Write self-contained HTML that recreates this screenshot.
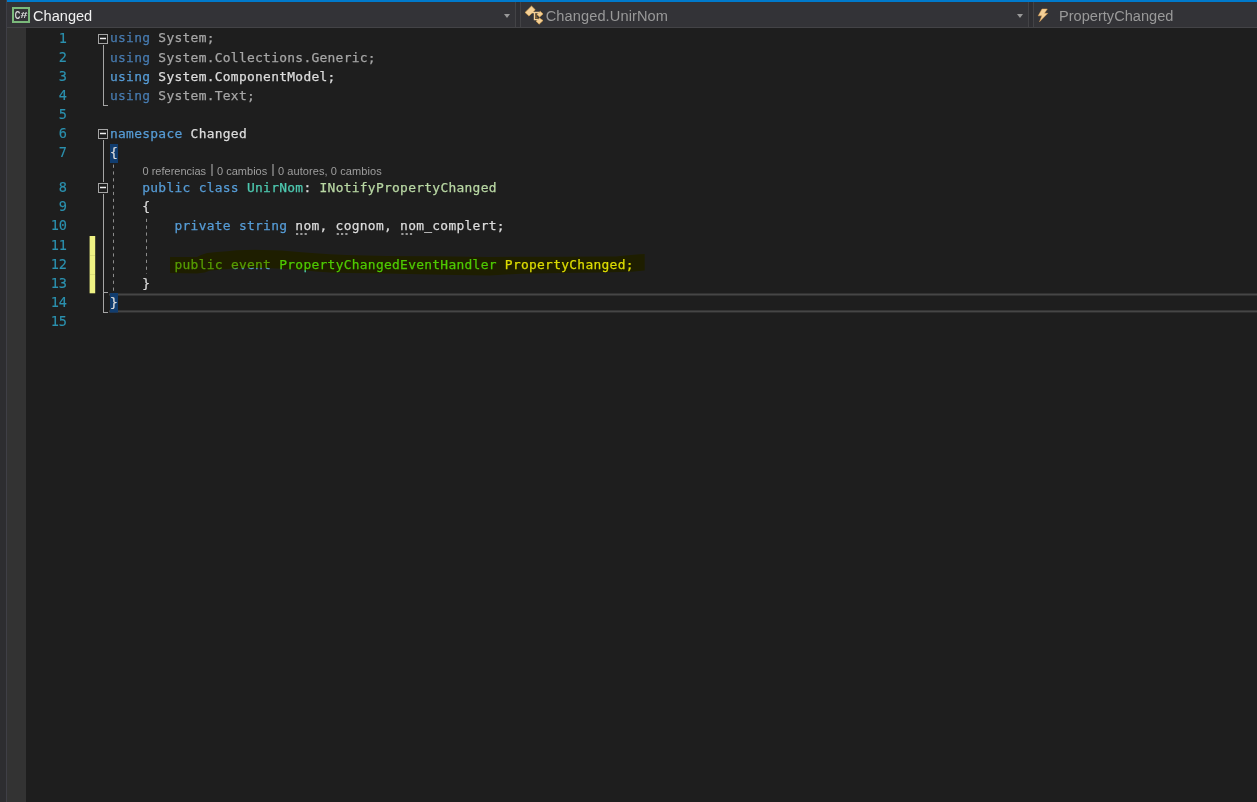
<!DOCTYPE html>
<html lang="es">
<head>
<meta charset="utf-8">
<title>Changed - UnirNom.cs</title>
<style>
  html, body { margin: 0; padding: 0; }
  body {
    width: 1257px; height: 802px; overflow: hidden; position: relative;
    background: #1e1e1e;
    font-family: "Liberation Sans", sans-serif;
  }
  #leftstrip { position: absolute; left: 0; top: 0; width: 6px; height: 802px; background: #2d2d30; }
  #leftborder { position: absolute; left: 6px; top: 0; width: 1px; height: 802px; background: #3f3f46; }
  #bluebar { position: absolute; left: 7px; top: 0; right: 0; height: 2px; background: #007acc; }
  #nav { position: absolute; left: 7px; top: 2px; right: 0; height: 25px; background: #333337; border-bottom: 1px solid #434346; }
  #margin { position: absolute; left: 7px; top: 28px; width: 19px; bottom: 0; background: #333333; }
  .navtext { position: absolute; top: 5.9px; height: 20px; line-height: 20px; font-size: 14.6px; white-space: nowrap; transform: scaleY(1.03); transform-origin: 0 15px; }
  .sep { position: absolute; top: 2px; width: 1px; height: 25px; background: #434346; }
  .gap { position: absolute; top: 2px; width: 4px; height: 25px; background: #2f2f33; }
  .arrow { position: absolute; top: 14px; width: 0; height: 0; border-left: 3.500px solid transparent; border-right: 3.500px solid transparent; border-top: 4px solid #999999; }

  #code { position: absolute; left: 0; top: 0; width: 1257px; height: 802px;
    font-family: "DejaVu Sans Mono", "Liberation Mono", monospace; font-size: 12.9px; letter-spacing: 0.296px; color: #dcdcdc; -webkit-text-stroke: 0.25px; }
  .ln { position: absolute; left: 110px; height: 19px; line-height: 19px; white-space: pre; }
  .num { font-size: 13.6px; letter-spacing: -0.125px; -webkit-text-stroke: 0.15px; position: absolute; left: 26px; width: 40.8px; text-align: right; height: 19px; line-height: 19px; color: #2b91af; white-space: pre; }
  .k { color: #569cd6; }
  .t { color: #4ec9b0; }
  .i { color: #b8d7a3; }
  .fk { color: #477bb0; }
  .f { color: #a6a6a6; }
  #lens { position: absolute; left: 142.500px; top: 162.700px; height: 16px; line-height: 16px; font-size: 11px; color: #9e9e9e; white-space: nowrap; font-family: "Liberation Sans", sans-serif; }
  #lens i { display: inline-block; width: 1.800px; height: 12.300px; background: #6a6a6a; vertical-align: -1.500px; margin: 0 4.500px 0 5.500px; }
  #deco { position: absolute; left: 0; top: 0; }
  #hl { position: absolute; left: 0; top: 0; mix-blend-mode: multiply; pointer-events: none; }
</style>
</head>
<body>
<div id="leftstrip"></div>
<div id="leftborder"></div>
<div id="bluebar"></div>
<div id="nav"></div>
<div id="margin"></div>

<!-- navigation bar contents -->
<svg id="navicons" width="1257" height="28" style="position:absolute;left:0;top:0">
  <!-- C# project icon -->
  <rect x="13" y="8" width="16" height="14" fill="none" stroke="#7bb97b" stroke-width="2"/>
  <text transform="translate(14.800 19.200) scale(0.7 1)" font-family="Liberation Sans, sans-serif" font-weight="bold" font-size="11" fill="#dcdcdc">C</text>
  <text x="20.600" y="17.800" font-family="Liberation Sans, sans-serif" font-weight="bold" font-size="8.500" fill="#dcdcdc" textLength="7" lengthAdjust="spacingAndGlyphs">#</text>
  <!-- class icon -->
  <g fill="#f3cf96" stroke="#e3a84c" stroke-width="0.600">
    <polygon points="531.500,6.100 535.200,9.700 529,16.100 525.100,12.400"/>
    <polygon points="540.200,11.300 543,13.900 539.600,17 536.900,14.400"/>
    <polygon points="539.500,18.100 543,20.500 539.100,24.200 536.100,21.300"/>
  </g>
  <path d="M531.500 12.500 H539 M534.500 12.500 V19.600 H538" fill="none" stroke="#f3cf96" stroke-width="1.400"/>
  <path d="M536 14.200 V18 H538" fill="none" stroke="#b97e2c" stroke-width="0.800"/>
  <!-- event icon -->
  <polygon points="1042,9 1047.300,9 1044.500,13.300 1047.800,13.300 1039.500,21.800 1041.800,15.800 1038.200,15.800" fill="#f3cf96" stroke="#e0a050" stroke-width="0.500"/>
</svg>
<div class="navtext" style="left:33px;color:#f1f1f1">Changed</div>
<div class="arrow" style="left:504px"></div>
<div class="sep" style="left:515px"></div>
<div class="gap" style="left:516px"></div>
<div class="sep" style="left:520px"></div>
<div class="navtext" style="left:545.700px;color:#999999;letter-spacing:0.100px">Changed.UnirNom</div>
<div class="arrow" style="left:1017px"></div>
<div class="sep" style="left:1028px"></div>
<div class="gap" style="left:1029px"></div>
<div class="sep" style="left:1033px"></div>
<div class="navtext" style="left:1059px;color:#999999">PropertyChanged</div>

<!-- editor decorations -->
<svg id="deco" width="1257" height="802" shape-rendering="crispEdges">
  <!-- change tracking -->
  <rect x="89.600" y="236" width="5.600" height="57.300" fill="#eff284" shape-rendering="auto"/>
  <rect x="90" y="255" width="5" height="1" fill="#dcdf7a"/><rect x="90" y="274" width="5" height="1" fill="#dcdf7a"/>
  <!-- current line -->
  <rect x="109" y="293.500" width="1148" height="2" fill="#464646" shape-rendering="auto"/>
  <rect x="109" y="310.400" width="1148" height="2" fill="#464646" shape-rendering="auto"/>
  <!-- brace matching -->
  <rect x="110" y="144" width="8" height="19" fill="#113d6f"/>
  <rect x="110" y="293" width="8" height="19.600" fill="#113d6f" shape-rendering="auto"/>
  <!-- outlining -->
  <g fill="none" stroke="#a5a5a5" stroke-width="1">
    <rect x="98.500" y="34.500" width="9" height="9" />
    <path d="M100 38.500 H106" stroke="#f0f0f0" stroke-width="1.5" shape-rendering="auto"/>
    <path d="M103.500 45 V106 M103 105.500 H108"/>
    <rect x="98.500" y="129.500" width="9" height="9" />
    <path d="M100 133.500 H106" stroke="#f0f0f0" stroke-width="1.5" shape-rendering="auto"/>
    <path d="M103.500 140 V182 M103.500 194 V313 M103 292.500 H108 M103 312.500 H108"/>
    <rect x="98.500" y="183.500" width="9" height="9" />
    <path d="M100 187.500 H106" stroke="#f0f0f0" stroke-width="1.5" shape-rendering="auto"/>
  </g>
  <!-- indent guides -->
  <g fill="none" stroke="#8c8c8c" stroke-width="1" stroke-dasharray="3.2 3.63" shape-rendering="auto">
    <path d="M113.500 164.600 V291"/>
    <path d="M146.500 218.800 V274"/>
  </g>
  <!-- suggestion dots -->
  <g fill="#9b9b9b" shape-rendering="auto">
    <rect x="296" y="233" width="2.2" height="2"/><rect x="300.3" y="233" width="2.2" height="2"/><rect x="304.6" y="233" width="2.2" height="2"/><rect x="336.7" y="233" width="2.2" height="2"/><rect x="341" y="233" width="2.2" height="2"/><rect x="345.3" y="233" width="2.2" height="2"/><rect x="401.3" y="233" width="2.2" height="2"/><rect x="405.6" y="233" width="2.2" height="2"/><rect x="409.9" y="233" width="2.2" height="2"/>
  </g>
</svg>

<div id="code">
  <div class="num" style="top:29px">1</div>
  <div class="num" style="top:48px">2</div>
  <div class="num" style="top:67px">3</div>
  <div class="num" style="top:86px">4</div>
  <div class="num" style="top:105px">5</div>
  <div class="num" style="top:124px">6</div>
  <div class="num" style="top:143px">7</div>
  <div class="num" style="top:178px">8</div>
  <div class="num" style="top:197px">9</div>
  <div class="num" style="top:216px">10</div>
  <div class="num" style="top:236px">11</div>
  <div class="num" style="top:255px">12</div>
  <div class="num" style="top:274px">13</div>
  <div class="num" style="top:293px">14</div>
  <div class="num" style="top:312px">15</div>

  <div class="ln f" style="top:28px"><span class="fk">using</span> System;</div>
  <div class="ln f" style="top:48px"><span class="fk">using</span> System.Collections.Generic;</div>
  <div class="ln" style="top:67px"><span class="k">using</span> System.ComponentModel;</div>
  <div class="ln f" style="top:86px"><span class="fk">using</span> System.Text;</div>
  <div class="ln" style="top:124px"><span class="k">namespace</span> Changed</div>
  <div class="ln" style="top:143px">{</div>
  <div class="ln" style="top:178px">    <span class="k">public</span> <span class="k">class</span> <span class="t">UnirNom</span>: <span class="i">INotifyPropertyChanged</span></div>
  <div class="ln" style="top:197px">    {</div>
  <div class="ln" style="top:216px">        <span class="k">private</span> <span class="k">string</span> nom, cognom, nom_complert;</div>
  <div class="ln" style="top:255px">        <span class="k">public</span> <span class="k">event</span> <span class="t">PropertyChangedEventHandler</span> PropertyChanged;</div>
  <div class="ln" style="top:274px">    }</div>
  <div class="ln" style="top:293px">}</div>
</div>
<div id="lens">0 referencias<i style="margin:0 4.300px 0 4.900px"></i>0 cambios<i style="margin:0 4.150px 0 4.750px"></i><span style="letter-spacing:0.090px">0 autores, 0 cambios</span></div>

<!-- yellow highlighter stroke -->
<svg id="hl" width="1257" height="802">
  <polygon fill="#ffff00" points="170,256.9 197,256.9 201,255.1 207,252.9 216.7,252 227,251.2 236.6,250.2 254.7,249.8 281.7,250.5 302,252.2 315.5,253.3 330,254.2 347,254.9 387.6,256 428.2,256.2 455,256.5 490,256.9 520.6,256.7 561,256.7 601.7,256.6 615.7,256.5 628,255.3 639.5,254.3 644.7,254 644.7,270.6 631.6,271.8 601.7,272.5 561,273 520.6,273.8 490,275.4 455,274.9 428.2,274.5 387.6,273.5 347,273.1 330,272.5 315.5,271.4 302,270 281.7,268.7 265,267.9 244.5,268.2 232.6,268.8 220.7,269.6 209.5,270.7 204.8,272.6 197,273.6 170,273"/>
</svg>
</body>
</html>
